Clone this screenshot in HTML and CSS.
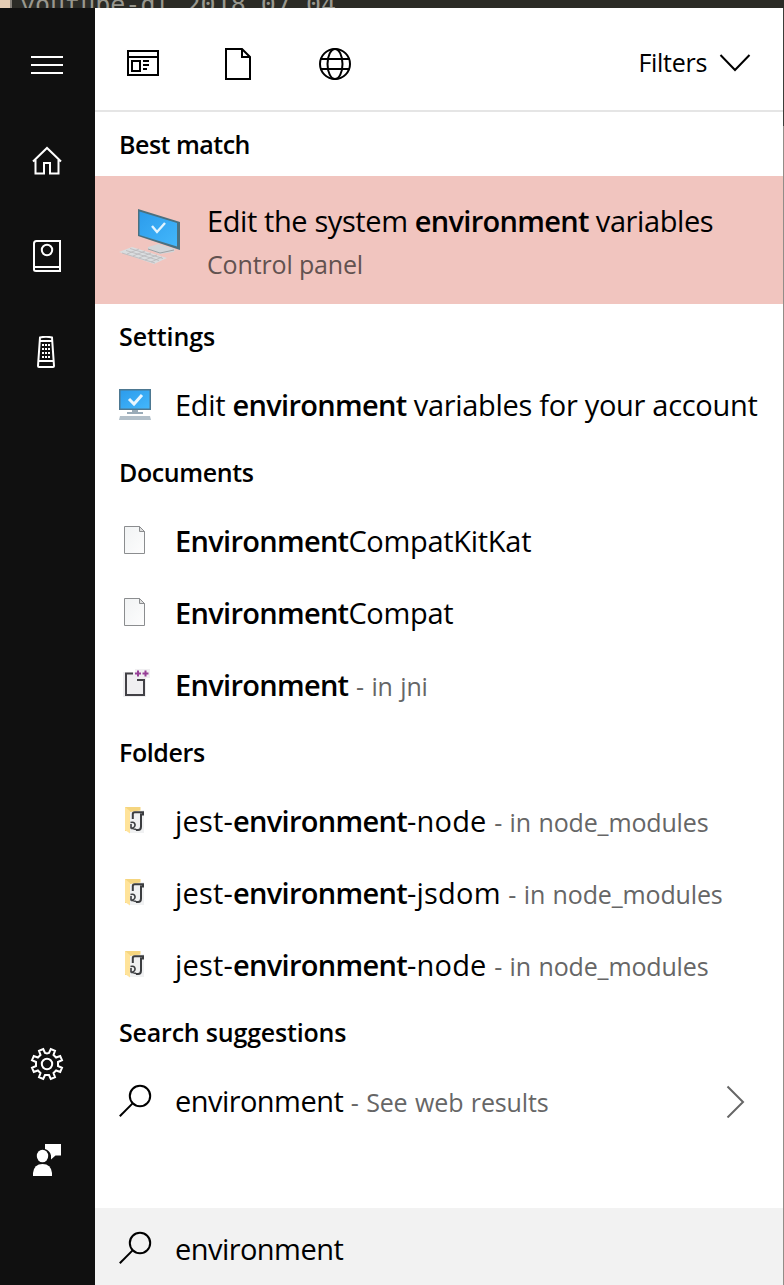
FILE: index.html
```html
<!DOCTYPE html>
<html lang="en">
<head>
<meta charset="utf-8">
<title>Search</title>
<link rel="stylesheet" href="styles.css">
</head>
<body>
<svg class="defs" width="0" height="0" aria-hidden="true">
  <defs>
    <linearGradient id="screen" x2="1" y2="1"><stop stop-color="#2c9cec"/><stop offset="1" stop-color="#43b7fb"/></linearGradient>
    <linearGradient id="paper" x2="1" y2="1"><stop stop-color="#f1f3f4"/><stop offset="1" stop-color="#fdfdfd"/></linearGradient>
    <symbol id="search" viewBox="0 0 34 34"><circle cx="21" cy="12" r="10.200"/><path d="M13.600 19.400L.800 32.200"/></symbol>
    <symbol id="doc" viewBox="0 0 32 32"><path d="M5.500 1.500h15l5 5v22h-20z" fill="url(#paper)" stroke="#8b8d8f"/><path d="M20.500 1.500v5h5z" fill="#dedede" stroke="#8b8d8f"/></symbol>
    <symbol id="folder" viewBox="0 0 32 32"><path d="M6 2h15.500v24H6z" fill="#f5d57f"/><path d="M11 7l14-2v23H11z" fill="#f0f1f2"/><path d="M6 2l5 4v22.500L6 25z" fill="#ffe39a"/><path d="M13.800 14V9q0-1.800 2-1.800h8.200v2.300h-2v12q0 3.500-3 3.500h-2" fill="none" stroke="#3b3d40" stroke-width="2"/><path d="M11.500 17.500q4-1 4.500 2t-4 4M12 19v4l5 1.500" fill="none" stroke="#3b3d40" stroke-width="1.600"/></symbol>
  </defs>
</svg>
<div class="backdrop">youtube-dl 2018.07.04</div>
<div class="panel">
  <nav class="rail">
    <div class="rail-item"><svg width="34" height="34"><path d="M1 9h32M1 17h32M1 25h32"/></svg></div>
    <div class="rail-item"><svg width="34" height="34"><path d="M3 17.500L17 4 31 17.500M5.500 15.500v14H14V19h6v10.500h8.500v-14"/></svg></div>
    <div class="rail-item"><svg width="34" height="34"><path d="M30 1H6.500Q4 1 4 3.500v26Q4 31 6 31h24zM4 27h26"/><circle cx="17" cy="10" r="5.200"/></svg></div>
    <div class="rail-item"><svg class="remote" width="34" height="34"><path d="M10 1.500Q16 0 22 1.500L24 30q0 1-1 1H9q-1 0-1-1zM10.500 5h11M9 25h14"/><path class="keys" d="M12 9h8M12 13h8M12 17h8M12 21h8"/></svg></div>
    <div class="rail-item settings"><svg width="34" height="34"><path d="M13.200 2l1.800 4 2 .500 2-.500 1.800-4 4.200 1.800-1.500 4.100 2.600 2.600 4.100-1.500L32 13.200 28 15v4l4 1.800-1.800 4.200-4.100-1.500-2.600 2.600 1.500 4.100-4.200 1.800-1.800-4h-4l-1.800 4L9 30.200l1.500-4.100-2.600-2.600L3.800 25 2 20.800 6 19v-4l-4-1.800L3.800 9l4.100 1.500 2.600-2.600L9 3.800z"/><circle cx="17" cy="17" r="5.200"/></svg></div>
    <div class="rail-item"><svg class="solid" width="34" height="34"><path d="M15 1h16v11.500h-5.500L21 16.500v-4q-1-5-6-6.500z"/><ellipse cx="12.500" cy="13" rx="5.700" ry="6.300"/><path d="M3 33v-3Q4 21 12.500 21T22 30v3z"/></svg></div>
  </nav>
  <main class="results">
    <header class="scopes">
      <svg width="34" height="34"><path d="M2 4h30v24H2zM2 10h30M6 14h8v10H6zM17 14h6M17 18h6M17 22h4"/></svg>
      <svg width="34" height="34"><path d="M4 2h16l8 8v22H4zM20 2v8h8"/></svg>
      <svg width="34" height="34"><circle cx="17" cy="17" r="15"/><ellipse cx="17" cy="17" rx="7.500" ry="15"/><path d="M2.500 12h29M2.500 22h29"/></svg>
      <div class="filters"><span>Filters</span><svg class="chevron" width="32" height="20"><path d="M1.500 2L16 17 30.500 2"/></svg></div>
    </header>
    <h2 class="first">Best match</h2>
    <div class="best">
      <svg width="64" height="64" viewBox="1 0 64 64"><path d="M30 39l10-3 17 5-1 3-14 2-12-5z" fill="#d3d6d9"/><path d="M30 41l12 4 14-3" fill="none" stroke="#9da2a5"/><path d="M20 1l42 13v28L20 28z" fill="#4b707f"/><path d="M21.500 3.500L59 15v23.500L21.500 27z" fill="url(#screen)"/><path d="M34 18l5 6 8-9" fill="none" stroke="#e1f4ff" stroke-width="2.400"/><path d="M1 44l13-5 35 11-13 6z" fill="#dadddf"/><path d="M4 45l33 10M8 42.500l33 10M12 40.500l33 10M9 46l12-5M15 48l12-5M21 50l12-5M27 52l12-5M33 54l11-5" fill="none" stroke="#b9b8ba" stroke-width=".8"/></svg>
      <div class="best-text"><div class="title best-title">Edit the system <b>environment</b> variables</div><div class="kind">Control panel</div></div>
    </div>
    <h2 class="tall">Settings</h2>
    <div class="row"><svg width="32" height="32"><path d="M0 0h32v21H0z" fill="#4d7891"/><path d="M1.500 1.500h29v18h-29z" fill="url(#screen)"/><path d="M10 10l5 5 8-9" fill="none" stroke="#e9f7ff" stroke-width="3"/><path d="M13 21h6v2h5v2H8v-2h5z" fill="#9aabb8"/><path d="M1 27h30l1 4H0z" fill="#b2bfc9"/></svg><div class="title">Edit <b>environment</b> variables for your account</div></div>
    <h2>Documents</h2>
    <div class="row"><svg width="32" height="32"><use href="#doc"/></svg><div class="title"><b>Environment</b>CompatKitKat</div></div>
    <div class="row"><svg width="32" height="32"><use href="#doc"/></svg><div class="title"><b>Environment</b>Compat</div></div>
    <div class="row"><svg width="32" height="32"><path d="M4 3h12V0h15v9h-4v19H4z" fill="#f0eff1"/><path d="M14 4.500H7V26h18V11h-7" fill="none" stroke="#424146" stroke-width="2"/><path d="M16 4.500h6M19 1.500v6M23.500 4.500h6M26.500 1.500v6" stroke="#963f96" stroke-width="2"/></svg><div class="title"><b>Environment</b><small> - in jni</small></div></div>
    <h2>Folders</h2>
    <div class="row"><svg width="32" height="32"><use href="#folder"/></svg><div class="title name">jest-<b>environment</b>-node<small> - in node_modules</small></div></div>
    <div class="row"><svg width="32" height="32"><use href="#folder"/></svg><div class="title name">jest-<b>environment</b>-jsdom<small> - in node_modules</small></div></div>
    <div class="row"><svg width="32" height="32"><use href="#folder"/></svg><div class="title name">jest-<b>environment</b>-node<small> - in node_modules</small></div></div>
    <h2 class="suggestions">Search suggestions</h2>
    <div class="row web"><svg class="line" width="34" height="34"><use href="#search"/></svg><div class="title term">environment<small> - See web results</small></div><svg class="next" width="20" height="34"><path d="M1.500 2.500L17 18 1.500 33.500"/></svg></div>
    <footer class="query"><svg class="line" width="34" height="34"><use href="#search"/></svg><div class="title term">environment</div></footer>
  </main>
  <div class="edge"></div>
</div>
</body>
</html>
```
FILE: styles.css
```css
* { box-sizing: border-box; }
body { margin: 0; width: 784px; height: 1285px; overflow: hidden; background: #fff; color: #000; font-family: "Open Sans", "Noto Sans", sans-serif; }
svg { flex: none; display: block; fill: none; }
.defs { position: absolute; }
.backdrop { height: 8px; padding-left: 20px; overflow: hidden; background: linear-gradient(90deg, #e5cdb5 10px, #858078 10px 12px, #2b2b26 12px); color: #99988f; font: 25px/9px "DejaVu Sans Mono", monospace; white-space: nowrap; }
.panel { display: flex; height: 1277px; }
.rail { width: 95px; background: #101010; padding: 9px 1px 77px 0; display: flex; flex-direction: column; }
.rail-item { height: 96px; display: flex; align-items: center; justify-content: center; }
.rail-item svg { stroke: #fff; stroke-width: 2; }
.rail-item .solid { fill: #fff; stroke: none; }
.rail-item .remote { margin-left: -1px; }
.rail-item .keys { stroke-dasharray: 2 1; }
.settings { margin-top: auto; }
.results { flex: 1; min-width: 0; display: flex; flex-direction: column; }
.edge { width: 1px; background: linear-gradient(#3d3d39 118px, #928d88 118px); }
.scopes { height: 104px; border-bottom: 2px solid #e5e5e5; display: flex; align-items: center; gap: 62px; padding: 10px 32px 0 31px; }
.scopes svg { stroke: #000; stroke-width: 2; }
.filters { margin-left: auto; display: flex; align-items: center; gap: 12px; font-size: 25px; letter-spacing: -.3px; padding-bottom: 4px; }
.filters .chevron { margin-top: 2px; }
h2 { margin: 0; height: 64px; padding: 0 0 0 24px; font-size: 25px; line-height: 60px; font-weight: 600; letter-spacing: -.4px; }
.first { line-height: 64px; letter-spacing: -.5px; }
.tall { height: 66px; line-height: 64px; letter-spacing: -.1px; }
.suggestions { letter-spacing: -.2px; }
.best { height: 128px; background: #f1c5bf; padding: 0 24px; display: flex; align-items: center; gap: 24px; }
.title { font-size: 29px; line-height: 40px; letter-spacing: -.3px; white-space: pre; }
.title b { font-weight: 600; letter-spacing: -.7px; }
.best-title { letter-spacing: -.4px; }
.name { letter-spacing: .2px; }
.term { letter-spacing: -.55px; }
.title small { font-size: 25px; color: #666; letter-spacing: -.15px; word-spacing: 1.2px; }
.best-text { padding-top: 2px; }
.kind { font-size: 25px; line-height: 36px; margin-top: 5px; color: #625250; letter-spacing: -.15px; }
.row { height: 72px; padding: 0 24px 2px; display: flex; align-items: center; gap: 24px; }
.line { stroke: #000; stroke-width: 2; margin-right: -2px; }
.next { stroke: #666; stroke-width: 2; margin-left: auto; margin-right: 13px; }
.query { margin-top: auto; height: 77px; background: #f2f2f2; padding: 5px 24px 0; display: flex; align-items: center; gap: 24px; }
.query .line { margin-top: -2px; }
```
